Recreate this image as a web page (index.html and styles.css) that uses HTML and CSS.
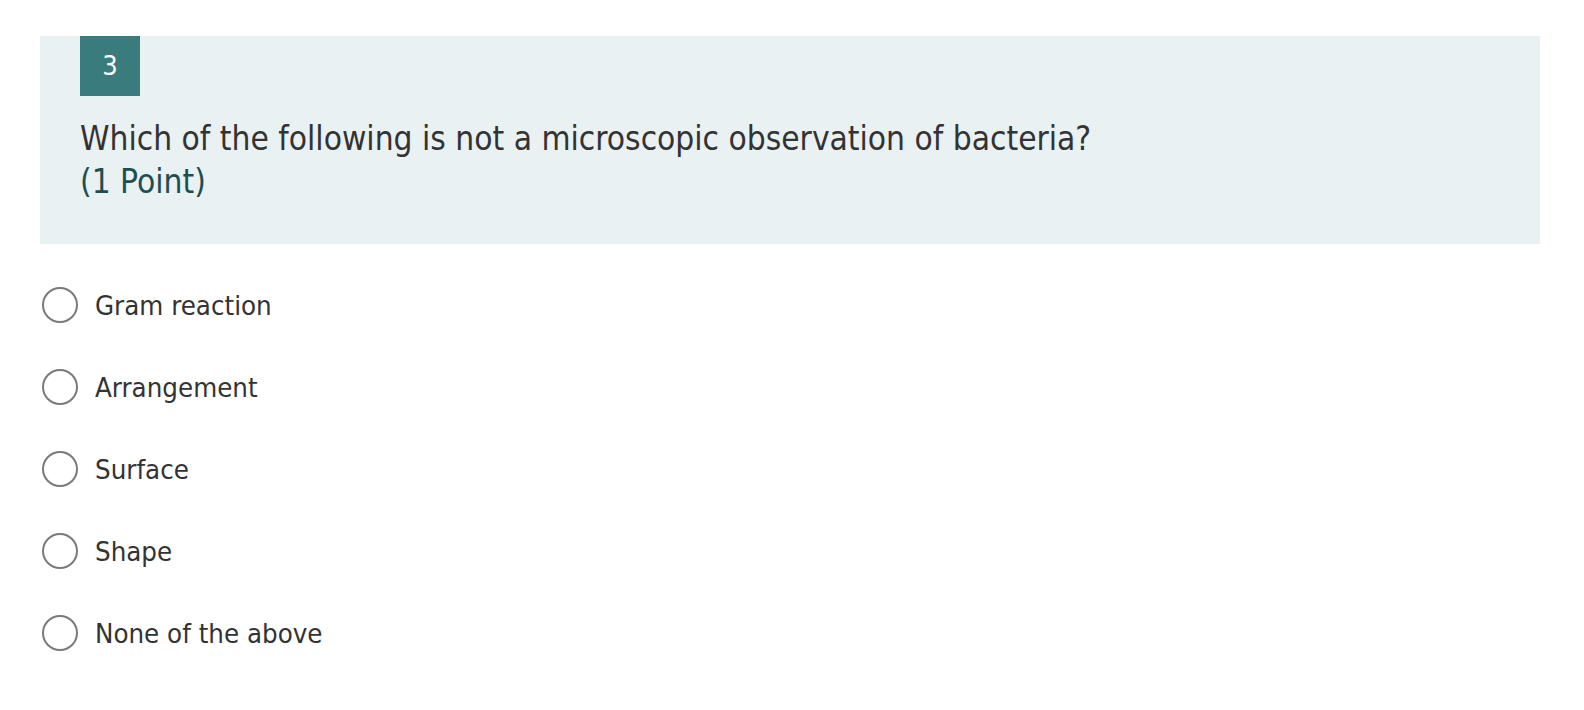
FILE: index.html
```html
<!DOCTYPE html>
<html lang="en">
<head>
<meta charset="utf-8">
<title>Question 3</title>
<link rel="stylesheet" href="styles.css">
</head>
<body>
<div class="page">
  <section class="question">
    <div class="badge">3</div>
    <div class="question-text">
      <span class="title">Which of the following is not a microscopic observation of bacteria?</span><br>
      <span class="points">(1 Point)</span>
    </div>
  </section>
  <ul class="options">
    <li class="option"><span class="radio"></span><span class="label">Gram reaction</span></li>
    <li class="option"><span class="radio"></span><span class="label">Arrangement</span></li>
    <li class="option"><span class="radio"></span><span class="label">Surface</span></li>
    <li class="option"><span class="radio"></span><span class="label">Shape</span></li>
    <li class="option"><span class="radio"></span><span class="label">None of the above</span></li>
  </ul>
</div>
</body>
</html>
```
FILE: styles.css
```css
html, body {
  margin: 0;
  padding: 0;
  background: #ffffff;
}

body {
  font-family: "DejaVu Sans Condensed", "DejaVu Sans", sans-serif;
  color: #333333;
}

.page {
  padding: 36px 44px 0 40px;
}

.question {
  background: #eaf1f3;
  width: 1500px;
  box-sizing: border-box;
  padding: 0 40px 41px 40px;
}

.badge {
  width: 60px;
  height: 60px;
  background: #3a7b7d;
  color: #ffffff;
  font-size: 27px;
  line-height: 60px;
  text-align: center;
}

.question-text {
  margin-top: 21px;
  font-size: 33.2px;
  line-height: 43px;
}

.title {
  color: #333333;
}

.points {
  color: #1d4f52;
}

.options {
  list-style: none;
  margin: 20px 0 0 0;
  padding: 0;
}

.option {
  height: 82px;
  display: flex;
  align-items: center;
}

.radio {
  width: 36px;
  height: 36px;
  box-sizing: border-box;
  border: 2px solid #7a7a7a;
  border-radius: 50%;
  margin-left: 2px;
  flex: none;
  background: #ffffff;
}

.label {
  margin-left: 17px;
  font-size: 27.4px;
  line-height: 38px;
  padding-top: 1px;
  color: #333333;
}
```
